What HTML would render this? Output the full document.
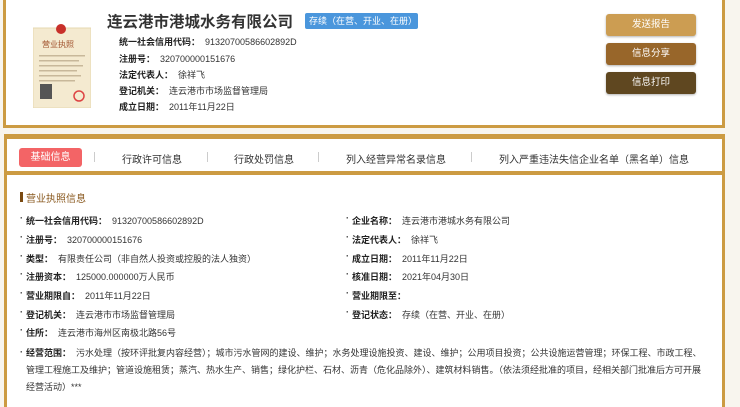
<!DOCTYPE html>
<html><head><meta charset="utf-8"><style>
*{margin:0;padding:0;box-sizing:border-box}
html{width:740px;height:407px;overflow:hidden}
body{width:740px;height:407px;overflow:hidden;background:#f8f5ee;font-family:"Liberation Sans","Noto Sans CJK SC",sans-serif;font-size:9px;color:#333;position:relative}
.a{position:absolute;white-space:nowrap}
.p1{position:absolute;left:3px;top:-4px;width:722px;height:132px;background:#fff;border:3px solid #cc9b42}
.p2{position:absolute;left:4px;top:134px;width:721px;height:273px;background:#fff;border:3px solid #cc9b42;border-top-width:5px;border-bottom:0}
.tabline{position:absolute;left:4px;top:171px;width:721px;height:4px;background:#cc9b42}
b{font-weight:bold;color:#222}
.btn{position:absolute;left:606px;width:90px;height:22px;border-radius:3px;color:#fff;font-size:9.5px;text-align:center;line-height:22px;box-shadow:0 1px 2px rgba(0,0,0,.3)}
.r{position:absolute;white-space:nowrap;font-size:9px;color:#333}
.r::before{content:"·";position:absolute;left:-6px;top:-1px;font-weight:bold}
</style></head><body>
<div class="p1"></div>
<div class="p2"></div>
<div class="tabline"></div>
<svg class="a" style="left:33px;top:22px" width="58" height="86">
<rect x="0" y="6" width="58" height="80" fill="#f4ead0" stroke="#e6d8b0"/>
<circle cx="28" cy="7" r="5" fill="#c8302a"/>
<text x="9" y="25" font-size="8" fill="#a0522d" font-family="Noto Sans CJK SC">营业执照</text>
<g fill="#c8b89a"><rect x="6" y="33" width="46" height="1.5"/><rect x="6" y="38" width="40" height="1.5"/><rect x="6" y="43" width="44" height="1.5"/><rect x="6" y="48" width="38" height="1.5"/><rect x="6" y="53" width="42" height="1.5"/><rect x="6" y="58" width="36" height="1.5"/></g>
<rect x="7" y="62" width="12" height="15" fill="#555"/>
<circle cx="46" cy="74" r="5" fill="none" stroke="#d44" stroke-width="1.5"/>
</svg>
<div class="a" style="left:107px;top:10px;font-size:15.5px;font-weight:bold;color:#333">连云港市港城水务有限公司</div>
<div class="a" style="left:305px;top:13px;width:113px;height:16px;background:#4a96dc;color:#fff;font-size:9px;line-height:16px;padding-left:4px;border-radius:2px">存续（在营、开业、在册）</div>
<div class="a" style="left:119px;top:35px"><b>统一社会信用代码：</b>&nbsp; 91320700586602892D</div>
<div class="a" style="left:119px;top:52px"><b>注册号：</b>&nbsp; 320700000151676</div>
<div class="a" style="left:119px;top:68px"><b>法定代表人：</b>&nbsp; 徐祥飞</div>
<div class="a" style="left:119px;top:84px"><b>登记机关：</b>&nbsp; 连云港市市场监督管理局</div>
<div class="a" style="left:119px;top:100px"><b>成立日期：</b>&nbsp; 2011年11月22日</div>
<div class="btn" style="top:14px;background:#cc9d52">发送报告</div>
<div class="btn" style="top:43px;background:#98662a">信息分享</div>
<div class="btn" style="top:72px;background:#5f4720">信息打印</div>
<div class="a" style="left:19px;top:148px;width:63px;height:19px;background:#f36466;border-radius:3px;color:#fff;font-size:10px;line-height:19px;text-align:center">基础信息</div>
<div class="a" style="left:94px;top:152px;width:1px;height:10px;background:#ccc"></div>
<div class="a" style="left:122px;top:151px;font-size:10px">行政许可信息</div>
<div class="a" style="left:207px;top:152px;width:1px;height:10px;background:#ccc"></div>
<div class="a" style="left:234px;top:151px;font-size:10px">行政处罚信息</div>
<div class="a" style="left:318px;top:152px;width:1px;height:10px;background:#ccc"></div>
<div class="a" style="left:346px;top:151px;font-size:10px">列入经营异常名录信息</div>
<div class="a" style="left:471px;top:152px;width:1px;height:10px;background:#ccc"></div>
<div class="a" style="left:499px;top:151px;font-size:10px">列入严重违法失信企业名单（黑名单）信息</div>
<div class="a" style="left:20px;top:192px;width:3px;height:10px;background:#7a4a12"></div>
<div class="a" style="left:26px;top:190px;font-size:10px;color:#8a5a20">营业执照信息</div>
<div class="r" style="left:26px;top:214px"><b>统一社会信用代码：</b>&nbsp; 91320700586602892D</div>
<div class="r" style="left:26px;top:233px"><b>注册号：</b>&nbsp; 320700000151676</div>
<div class="r" style="left:26px;top:252px"><b>类型：</b>&nbsp; 有限责任公司（非自然人投资或控股的法人独资）</div>
<div class="r" style="left:26px;top:270px"><b>注册资本：</b>&nbsp; 125000.000000万人民币</div>
<div class="r" style="left:26px;top:289px"><b>营业期限自：</b>&nbsp; 2011年11月22日</div>
<div class="r" style="left:26px;top:308px"><b>登记机关：</b>&nbsp; 连云港市市场监督管理局</div>
<div class="r" style="left:26px;top:326px"><b>住所：</b>&nbsp; 连云港市海州区南极北路56号</div>
<div class="r" style="left:352px;top:214px"><b>企业名称：</b>&nbsp; 连云港市港城水务有限公司</div>
<div class="r" style="left:352px;top:233px"><b>法定代表人：</b>&nbsp; 徐祥飞</div>
<div class="r" style="left:352px;top:252px"><b>成立日期：</b>&nbsp; 2011年11月22日</div>
<div class="r" style="left:352px;top:270px"><b>核准日期：</b>&nbsp; 2021年04月30日</div>
<div class="r" style="left:352px;top:289px"><b>营业期限至：</b></div>
<div class="r" style="left:352px;top:308px"><b>登记状态：</b>&nbsp; 存续（在营、开业、在册）</div>
<div class="r" style="left:26px;top:345px;white-space:normal;width:676px;line-height:17px"><b>经营范围：</b>&nbsp; 污水处理（按环评批复内容经营）；城市污水管网的建设、维护；水务处理设施投资、建设、维护；公用项目投资；公共设施运营管理；环保工程、市政工程、管理工程施工及维护；管道设施租赁；蒸汽、热水生产、销售；绿化护栏、石材、沥青（危化品除外）、建筑材料销售。（依法须经批准的项目，经相关部门批准后方可开展经营活动）***</div>
</body></html>
